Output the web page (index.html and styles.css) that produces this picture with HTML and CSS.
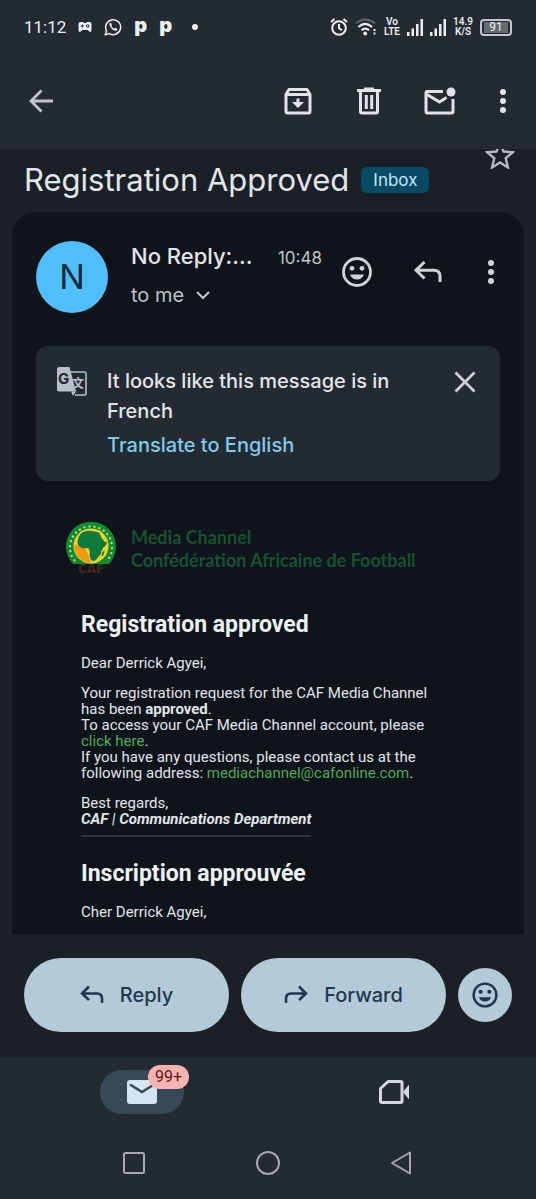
FILE: index.html
```html
<!DOCTYPE html>
<html lang="en">
<head>
    <meta charset="UTF-8">
    <meta name="viewport" content="width=device-width, initial-scale=1">
    <title>Registration Approved</title>
    <link rel="stylesheet" href="styles.css">
</head>
<body>
    <div class="status-bar">
        <div class="status-left">
            <span class="clock">11:12</span>
            <svg width="14" height="12" viewBox="0 0 14 12"><path d="M2.5 1h2.500l1 1h2l1-1h2.500Q13.500 1 13.500 3v6q0 2-1.500 2L9.500 9h-5L2 11Q.5 11 .5 9V3Q.5 1 2.500 1z" fill="#eceff1"/><path d="M4.300 3.500v3M2.800 5h3" stroke="#242a31"/><circle cx="9.700" cy="5" r="1.300" fill="none" stroke="#242a31"/></svg>
            <svg width="18" height="18" viewBox="0 0 18 18" fill="none"><path d="M1.300 16.700l1.200-4.100A7.500 7.500 0 1 1 5.300 15.600z" stroke="#eceff1" stroke-width="1.500"/><path d="M6.300 4.800c-1.300.8-1 2.800.6 4.900 2 2.500 4.600 3.800 5.900 2.500.8-.9.500-1.400-.3-1.800l-1.300-.6-.9 1c-1.300-.5-2.400-1.500-3-2.700l.7-.9-.8-2z" fill="#eceff1"/></svg>
            <span class="app-mark">p</span>
            <span class="app-mark">p</span>
            <span class="more-dot"></span>
        </div>
        <div class="status-right">
            <svg width="18" height="18" viewBox="0 0 18 18" fill="none" stroke="#eceff1" stroke-width="2"><circle cx="9" cy="10" r="6.800"/><path d="M9 6v4.300l3 1.800M1 4l3.500-3M17 4l-3.500-3"/></svg>
            <svg width="22" height="18" viewBox="0 0 22 18" fill="none" stroke-width="2"><path d="M1 5.500Q10 -2.500 20 5.500" stroke="#5f656b"/><path d="M3.500 9Q10 2.800 17 9M6.500 12.300q3.800-3.300 7.500 0" stroke="#eceff1"/><circle cx="10.200" cy="15.500" r="1.900" fill="#eceff1"/><path d="M19.500 11v2M19.500 14.500v2" stroke="#eceff1"/></svg>
            <span class="mini">Vo<br>LTE</span>
            <svg width="16" height="17" viewBox="0 0 16 17" fill="#eceff1"><path d="M0 13h2.500v4H0zM4.500 9.500H7V17H4.500zM9 5h2.500v12H9zM13.500 0H16v17h-2.500z"/></svg>
            <svg width="16" height="17" viewBox="0 0 16 17" fill="#eceff1"><path d="M0 13h2.500v4H0zM4.500 9.500H7V17H4.500zM9 5h2.500v12H9zM13.500 0H16v17h-2.500z"/></svg>
            <span class="mini">14.9<br>K/S</span>
            <span class="battery"><span class="battery-level">91</span></span>
        </div>
    </div>

    <header class="app-bar">
        <button class="icon-btn" aria-label="Back">
            <svg width="24" height="24" viewBox="0 0 24 24" fill="none" stroke="#bfc4cf" stroke-width="2.800"><path d="M24 12H2M12.500 1.500L2 12l10.500 10.500"/></svg>
        </button>
        <div class="app-actions">
            <button class="icon-btn" aria-label="Archive">
                <svg width="28" height="28" viewBox="0 0 28 28" fill="none" stroke="#dfe3ec" stroke-width="3"><path d="M2 7.500v17q0 1.500 1.500 1.500h21q1.500 0 1.500-1.500v-17L23 2.500H5z" stroke-linejoin="round"/><path d="M2 7.500h24M14 11.500v8"/><path d="M8 15h12l-6 6z" fill="#dfe3ec" stroke="none"/></svg>
            </button>
            <button class="icon-btn" aria-label="Delete">
                <svg width="24" height="28" viewBox="0 0 24 28" fill="none" stroke="#dfe3ec" stroke-width="3"><path d="M0 3.500h24M7 2h10M3.500 3.500v21q0 1.500 1.500 1.500h14q1.500 0 1.500-1.500v-21M9.300 8v14M14.700 8v14"/></svg>
            </button>
            <button class="icon-btn" aria-label="Mark as unread">
                <svg width="32" height="28" viewBox="0 0 32 28" fill="none" stroke="#dfe3ec" stroke-width="3"><path d="M19 4.500H3.500Q2 4.500 2 6v18.500Q2 26 3.500 26h24q1.500 0 1.500-1.500V12"/><path d="M3 7.500l12.500 7.500 7-4.500"/><circle cx="27" cy="5" r="4.500" fill="#dfe3ec" stroke="none"/></svg>
            </button>
            <button class="icon-btn narrow" aria-label="More options">
                <svg width="6" height="26" viewBox="0 0 6 26" fill="#dfe3ec"><circle cx="3" cy="4" r="3"/><circle cx="3" cy="13" r="3"/><circle cx="3" cy="22" r="3"/></svg>
            </button>
        </div>
    </header>

    <main class="conversation">
        <div class="subject-row">
            <h1>Registration Approved</h1>
            <span class="label">Inbox</span>
            <button class="star-btn" aria-label="Star">
                <svg width="30" height="28" viewBox="0 0 30 28" fill="none" stroke="#b5bac2" stroke-width="2.400"><path d="M15 2l3.500 8.500 9.500.7-7.300 6 2.300 9.300-8-5-8 5 2.300-9.300-7.300-6 9.500-.7z"/></svg>
            </button>
        </div>

        <article class="message">
            <div class="message-header">
                <div class="avatar">N</div>
                <div class="sender">
                    <div class="sender-line">
                        <span class="sender-name">No Reply:...</span>
                        <span class="time">10:48</span>
                    </div>
                    <button class="recipients">to me
                        <svg width="14" height="9" viewBox="0 0 14 9" fill="none" stroke="#bfc3ca" stroke-width="2.200"><path d="M1 1l6 6 6-6"/></svg>
                    </button>
                </div>
                <div class="message-actions">
                    <button class="icon-btn" aria-label="Add reaction">
                        <svg width="32" height="32" viewBox="0 0 32 32"><circle cx="16" cy="16" r="13.500" fill="none" stroke="#cfd2da" stroke-width="2.800"/><circle cx="11" cy="12.300" r="2.400" fill="#cfd2da"/><circle cx="21" cy="12.300" r="2.400" fill="#cfd2da"/><path d="M9 18.500h14q-2 5-7 5t-7-5z" fill="#cfd2da"/></svg>
                    </button>
                    <button class="icon-btn" aria-label="Reply">
                        <svg width="28" height="22" viewBox="0 0 28 22" fill="none" stroke="#cfd2da" stroke-width="3"><path d="M10.500 1L2 9.200l8.500 8.300M2.500 9.200H20q6 0 6 6V21"/></svg>
                    </button>
                    <button class="icon-btn narrow" aria-label="More options">
                        <svg width="6" height="26" viewBox="0 0 6 26" fill="#cfd2da"><circle cx="3" cy="4" r="3"/><circle cx="3" cy="13" r="3"/><circle cx="3" cy="22" r="3"/></svg>
                    </button>
                </div>
            </div>

            <section class="translate">
                <svg width="32" height="32" viewBox="0 0 32 32">
                    <path d="M14 6h14.500q1.500 0 1.500 1.500v20q0 1.500-1.500 1.500H19" fill="none" stroke="#b9bfc7" stroke-width="1.600"/>
                    <path d="M3 1h10.500l6.500 24.500h-17Q1 25.500 1 23.500V3q0-2 2-2z" fill="#b9bfc7"/>
                    <path d="M15 25.500h5l-3 4.500z" fill="#b9bfc7"/>
                    <text class="glyph-g" x="2" y="18">G</text>
                    <text class="glyph-wen" x="16" y="22">文</text>
                </svg>
                <div class="translate-text">
                    <p>It looks like this message is in French</p>
                    <a href="#">Translate to English</a>
                </div>
                <button class="close-btn" aria-label="Dismiss">
                    <svg width="22" height="22" viewBox="0 0 22 22" stroke="#cdd0d8" stroke-width="2.800"><path d="M1.500 1.500l19 19M20.500 1.500l-19 19"/></svg>
                </button>
            </section>

            <div class="brand">
                <svg class="brand-logo" width="52" height="54" viewBox="0 0 52 54">
                    <path d="M8 43A25 25 0 1 1 44 43z" fill="#128a35"/>
                    <path d="M10 40A21 21 0 1 1 42 40" fill="none" stroke="#cfe06a" stroke-width="2" stroke-dasharray="2 3"/>
                    <circle cx="26" cy="25" r="17.500" fill="#f6d32c"/>
                    <path d="M9 24q6-1 10 3t7 15q-15-1-17-18z" fill="#f39a12"/>
                    <path d="M18 11q5-2 9-1l7 1.500 3 6 3 3.500h2q0 3-4 6-2 3-2 6l-3 3q-2 4-5 4-3-1-3.500-6 1-4-1.500-7-5 1-7-.5-4-2.500-3.500-6 .5-4 2-6 1-2.500 3.500-3.500z" fill="#0b7a3c"/>
                    <path d="M37 32l2.500-3q0 5-3 7z" fill="#0b7a3c"/>
                    <text class="glyph-caf" x="26" y="52" text-anchor="middle">CAF</text>
                </svg>
                <div class="brand-name">Media Channel<br>Confédération Africaine de Football</div>
            </div>

            <div class="mail-body">
                <h2>Registration approved</h2>
                <p>Dear Derrick Agyei,</p>
                <p>Your registration request for the CAF Media Channel has been <b>approved</b>.<br>
                To access your CAF Media Channel account, please <a href="#">click here</a>.<br>
                If you have any questions, please contact us at the following address: <a href="#">mediachannel@cafonline.com</a>.</p>
                <p class="closing">Best regards,</p>
                <p class="signature"><b>CAF</b> | <b>Communications Department</b></p>
                <h2>Inscription approuvée</h2>
                <p>Cher Derrick Agyei,</p>
            </div>
        </article>
    </main>

    <div class="reply-bar">
        <button class="pill">
            <svg width="24" height="20" viewBox="0 0 24 20" fill="none" stroke="#20384a" stroke-width="2.600"><path d="M9 1.500L2 8.500l7 6.500M2 8.500h15q5 0 5 5V18"/></svg>
            Reply
        </button>
        <button class="pill">
            <svg width="24" height="20" viewBox="0 0 24 20" fill="none" stroke="#20384a" stroke-width="2.600"><path d="M15 1.500l7 7-7 6.500M22 8.500H7q-5 0-5 5V18"/></svg>
            Forward
        </button>
        <button class="react-btn" aria-label="Add reaction">
            <svg width="28" height="28" viewBox="0 0 32 32"><circle cx="16" cy="16" r="13" fill="none" stroke="#20384a" stroke-width="2.800"/><circle cx="11" cy="12.300" r="2.400" fill="#20384a"/><circle cx="21" cy="12.300" r="2.400" fill="#20384a"/><path d="M9 18.500h14q-2 5-7 5t-7-5z" fill="#20384a"/></svg>
        </button>
    </div>

    <nav class="tabs">
        <button class="tab" aria-label="Mail">
            <span class="tab-pill">
                <svg width="30" height="24" viewBox="0 0 30 24"><rect width="30" height="24" rx="3" fill="#d3e5f5"/><path d="M3 4.500l12 7.500 12-7.500" fill="none" stroke="#374955" stroke-width="2.600"/></svg>
                <span class="badge">99+</span>
            </span>
        </button>
        <button class="tab" aria-label="Meet">
            <svg width="30" height="24" viewBox="0 0 30 24"><path d="M9 1.500h12.500q1.500 0 1.500 1.500v18q0 1.500-1.500 1.500H3q-1.500 0-1.500-1.500V8.500z" fill="none" stroke="#d3d8df" stroke-width="3" stroke-linejoin="round"/><path d="M24 12l6-7.500v15z" fill="#d3d8df"/></svg>
        </button>
    </nav>

    <div class="system-nav">
        <button aria-label="Recents"><svg width="26" height="26" viewBox="0 0 26 26" fill="none" stroke="#a5a9af" stroke-width="2"><rect x="3" y="3" width="20" height="20" rx="1.500"/></svg></button>
        <button aria-label="Home"><svg width="26" height="26" viewBox="0 0 26 26" fill="none" stroke="#a5a9af" stroke-width="2"><circle cx="13" cy="13" r="11"/></svg></button>
        <button aria-label="Back"><svg width="26" height="26" viewBox="0 0 26 26" fill="none" stroke="#a5a9af" stroke-width="2" stroke-linejoin="round"><path d="M21 2.500v21L3 13z"/></svg></button>
    </div>
</body>
</html>
```

FILE: styles.css
```css
:root {
    --bar: #242a31;
    --background: #1b2027;
    --surface: #0f131a;
    --text: #e2e5ec;
    --text-secondary: #bfc3ca;
    --link: #7fcaf0;
    --green: #51a860;
    --pill: #b5cad8;
    --pill-text: #20384a;
}

* {
    box-sizing: border-box;
}

body {
    margin: 0;
    height: 100vh;
    display: flex;
    flex-direction: column;
    overflow: hidden;
    background: var(--background);
    color: var(--text);
    font-family: Inter, Roboto, sans-serif;
}

h1, h2, p {
    margin: 0;
}

button {
    border: none;
    padding: 0;
    background: none;
    color: inherit;
    font-family: inherit;
    cursor: pointer;
}

a {
    text-decoration: none;
}

svg {
    display: block;
    flex-shrink: 0;
}

/* system status bar */
.status-bar {
    height: 54px;
    padding: 0 24px;
    display: flex;
    flex-shrink: 0;
    justify-content: space-between;
    align-items: center;
    background: var(--bar);
    font-family: Roboto, sans-serif;
    color: #eceff1;
}

.status-left {
    display: flex;
    align-items: center;
    gap: 12px;
}

.status-right {
    display: flex;
    align-items: center;
    gap: 7px;
}

.clock {
    font-size: 17px;
}

.app-mark {
    font-family: Inter, sans-serif;
    font-size: 20px;
    line-height: 20px;
    font-weight: 900;
    padding-bottom: 4px;
}

.more-dot {
    width: 6px;
    height: 6px;
    margin-left: 8px;
    border-radius: 50%;
    background: #eceff1;
}

.mini {
    font-size: 10px;
    line-height: 10px;
    font-weight: 600;
    text-align: center;
}

.battery {
    width: 32px;
    height: 17px;
    padding: 1px 2px;
    border: 2px solid #c3c7cb;
    border-radius: 4px;
}

.battery-level {
    display: block;
    background: #666b71;
    font-size: 12px;
    line-height: 11px;
    text-align: center;
}

/* app bar */
.app-bar {
    height: 95px;
    padding: 0 17px 2px;
    display: flex;
    flex-shrink: 0;
    justify-content: space-between;
    align-items: center;
    background: var(--bar);
}

.app-actions {
    display: flex;
    gap: 23px;
}

.icon-btn {
    width: 48px;
    height: 48px;
    display: flex;
    align-items: center;
    justify-content: center;
}

.icon-btn.narrow {
    width: 32px;
}

/* conversation */
.conversation {
    flex: 1;
    min-height: 0;
    padding: 0 12px;
    display: flex;
    flex-direction: column;
    overflow: hidden;
}

.subject-row {
    height: 63px;
    padding: 0 9px 2px 12px;
    display: flex;
    flex-shrink: 0;
    align-items: center;
    gap: 12px;
}

h1 {
    font-size: 31px;
    line-height: 40px;
    font-weight: 400;
}

.label {
    padding: 0 12px;
    border-radius: 6px;
    background: #074a64;
    color: #c2e8fb;
    font-size: 17px;
    line-height: 26px;
}

.star-btn {
    align-self: flex-start;
    margin: -8px 0 0 auto;
}

.message {
    flex: 1;
    min-height: 0;
    padding: 29px 24px 0;
    overflow: hidden;
    border-radius: 24px 24px 0 0;
    background: var(--surface);
}

.message-header {
    display: flex;
    align-items: flex-start;
}

.avatar {
    width: 72px;
    height: 72px;
    flex-shrink: 0;
    border-radius: 50%;
    background: #4fc0fb;
    color: #10293a;
    font-size: 34px;
    line-height: 72px;
    text-align: center;
}

.sender {
    flex: 1;
    min-width: 0;
    margin-left: 23px;
}

.sender-line {
    display: flex;
    justify-content: space-between;
    align-items: baseline;
}

.sender-name {
    font-size: 22px;
    line-height: 30px;
    font-weight: 500;
}

.time {
    color: var(--text-secondary);
    font-size: 17px;
}

.recipients {
    display: flex;
    align-items: center;
    gap: 12px;
    margin-top: 9px;
    color: var(--text-secondary);
    font-size: 20px;
    line-height: 30px;
}

.message-actions {
    display: flex;
    margin: 7px -7px 0 11px;
    gap: 23px;
}

/* translate banner */
.translate {
    display: flex;
    align-items: flex-start;
    margin-top: 33px;
    padding: 20px 24px 21px 20px;
    border-radius: 12px;
    background: var(--bar);
}

.translate-text {
    flex: 1;
    margin-left: 19px;
    font-size: 20px;
    line-height: 30px;
    font-weight: 500;
}

.translate-text a {
    display: block;
    margin-top: 4px;
    color: var(--link);
}

.glyph-g {
    fill: var(--bar);
    font-size: 15px;
    font-weight: 700;
}

.glyph-wen {
    fill: #b9bfc7;
    font-family: "Noto Sans CJK SC", sans-serif;
    font-size: 12px;
    font-weight: 700;
}

.close-btn {
    padding: 5px 0;
}

/* mail content */
.brand {
    display: flex;
    align-items: center;
    gap: 14px;
    margin: 40px 0 0 29px;
}

.brand-logo {
    overflow: visible;
}

.brand-name {
    padding-top: 2px;
    color: #155232;
    font-family: Lato, sans-serif;
    font-size: 18px;
    line-height: 23px;
    font-weight: 700;
}

.glyph-caf {
    fill: #43241f;
    font-family: "DejaVu Sans", sans-serif;
    font-size: 12px;
    font-weight: 700;
}

.mail-body {
    padding: 0 45px;
    font-family: Roboto, sans-serif;
    font-size: 15px;
    line-height: 16px;
}

.mail-body h2 {
    margin: 37px 0 17px;
    font-size: 23px;
    line-height: 26px;
    font-weight: 700;
    color: #eef1f6;
}

.mail-body p {
    margin-bottom: 14px;
}

.mail-body a {
    color: var(--green);
}

.mail-body .closing {
    margin-bottom: 0;
}

.mail-body .signature {
    width: fit-content;
    margin-bottom: 0;
    padding-bottom: 8px;
    border-bottom: 2px solid #2f3338;
    font-style: italic;
}

.mail-body .signature + h2 {
    margin-top: 24px;
}

/* reply bar */
.reply-bar {
    display: flex;
    flex-shrink: 0;
    align-items: center;
    gap: 12px;
    padding: 24px 24px 25px;
}

.pill {
    flex: 1;
    height: 74px;
    display: flex;
    align-items: center;
    justify-content: center;
    gap: 16px;
    border-radius: 37px;
    background: var(--pill);
    color: var(--pill-text);
    font-size: 20px;
    font-weight: 500;
}

.react-btn {
    width: 54px;
    height: 54px;
    display: flex;
    align-items: center;
    justify-content: center;
    border-radius: 50%;
    background: var(--pill);
}

/* bottom tabs */
.tabs {
    display: flex;
    flex-shrink: 0;
    height: 70px;
    padding: 0 16px;
    background: var(--bar);
}

.tab {
    flex: 1;
    display: flex;
    align-items: center;
    justify-content: center;
}

.tab-pill {
    position: relative;
    width: 84px;
    height: 44px;
    display: flex;
    align-items: center;
    justify-content: center;
    border-radius: 22px;
    background: #374955;
}

.badge {
    position: absolute;
    top: -5px;
    right: -5px;
    padding: 0 7px;
    border-radius: 12px;
    background: #f6b3b0;
    color: #5c1414;
    font-family: Roboto, sans-serif;
    font-size: 16px;
    line-height: 24px;
}

.system-nav {
    display: flex;
    flex-shrink: 0;
    justify-content: center;
    height: 72px;
    background: var(--bar);
}

.system-nav button {
    width: 25%;
    display: flex;
    align-items: center;
    justify-content: center;
}
```
